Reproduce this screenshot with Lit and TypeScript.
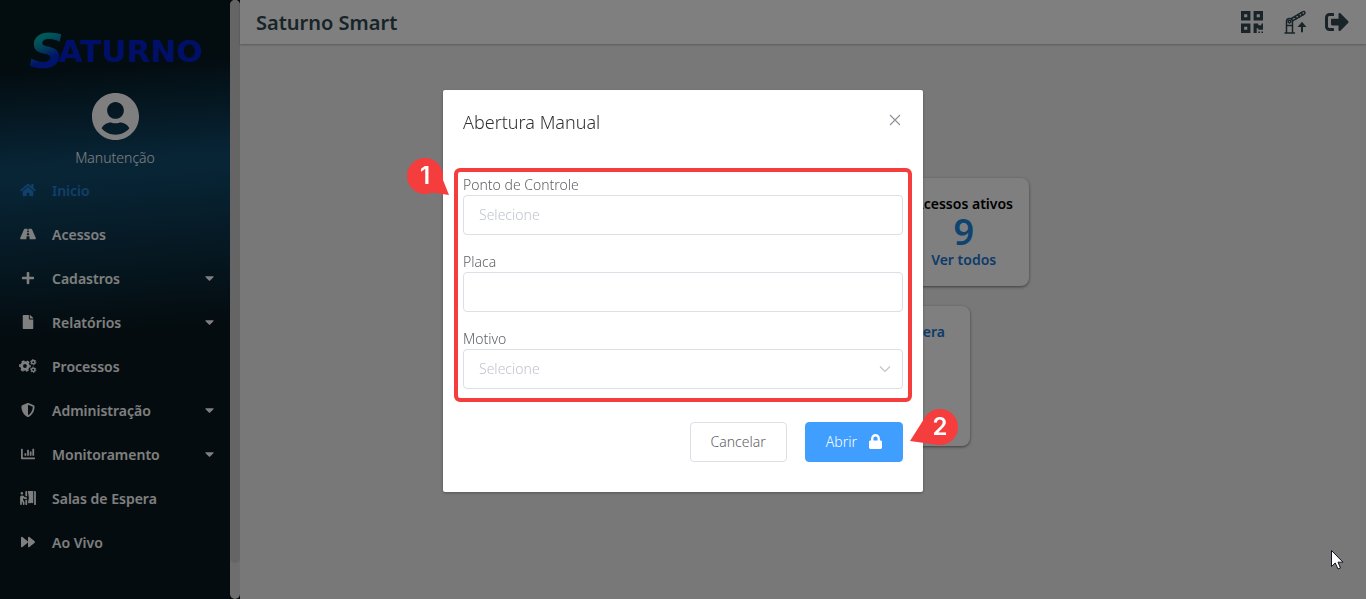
import { LitElement, html, css, svg, nothing } from "lit";
import { customElement, property, state } from "lit/decorators.js";

interface Glyph {
  box: string;
  body: unknown;
}

const path = (box: string, d: string): Glyph => ({ box, body: svg`<path d=${d} />` });

const ICONS: Record<string, Glyph> = {
  home: path("0 0 576 512", "M280.37 148.26L96 300.11V464a16 16 0 0 0 16 16l112.06-.29a16 16 0 0 0 15.92-16V368a16 16 0 0 1 16-16h64a16 16 0 0 1 16 16v95.64a16 16 0 0 0 16 16.05L464 480a16 16 0 0 0 16-16V300L295.67 148.26a12.19 12.19 0 0 0-15.3 0zM571.6 251.47L488 182.56V44.05a12 12 0 0 0-12-12h-56a12 12 0 0 0-12 12v72.61L318.47 43a48 48 0 0 0-61 0L4.34 251.47a12 12 0 0 0-1.6 16.9l25.5 31A12 12 0 0 0 45.15 301l235.22-193.74a12.19 12.19 0 0 1 15.3 0L530.9 301a12 12 0 0 0 16.9-1.6l25.5-31a12 12 0 0 0-1.7-16.93z"),
  road: path("0 0 576 512", "M573.19 402.67l-139.79-320C428.43 71.29 417.6 64 405.68 64h-97.59l2.45 23.16c.5 4.72-3.21 8.84-7.96 8.84h-29.16c-4.75 0-8.46-4.12-7.96-8.84L267.91 64h-97.59c-11.93 0-22.76 7.29-27.73 18.67L2.8 402.67C-6.45 423.86 8.31 448 30.54 448h196.84l10.31-97.68c.86-8.14 7.72-14.32 15.91-14.32h68.8c8.19 0 15.05 6.18 15.91 14.32L348.62 448h196.84c22.23 0 36.99-24.14 27.73-45.33zM260.4 135.16a8 8 0 0 1 7.96-7.16h39.29c4.09 0 7.53 3.09 7.96 7.16l4.6 43.58c.75 7.09-4.81 13.26-11.93 13.26h-40.54c-7.13 0-12.68-6.17-11.93-13.26l4.59-43.58zM315.64 304h-55.29c-9.5 0-16.91-8.23-15.91-17.68l5.07-48c.86-8.14 7.72-14.32 15.91-14.32h45.15c8.19 0 15.05 6.18 15.91 14.32l5.07 48c1 9.45-6.41 17.68-15.91 17.68z"),
  plus: path("0 0 448 512", "M416 208H272V64c0-17.67-14.33-32-32-32h-32c-17.67 0-32 14.33-32 32v144H32c-17.67 0-32 14.33-32 32v32c0 17.67 14.33 32 32 32h144v144c0 17.67 14.33 32 32 32h32c17.67 0 32-14.33 32-32V304h144c17.67 0 32-14.33 32-32v-32c0-17.67-14.33-32-32-32z"),
  file: path("0 0 384 512", "M224 136V0H24C10.7 0 0 10.7 0 24v464c0 13.3 10.7 24 24 24h336c13.3 0 24-10.7 24-24V160H248c-13.2 0-24-10.8-24-24zm160-14.1v6.1H256V0h6.1c6.4 0 12.5 2.5 17 7l97.9 98c4.5 4.5 7 10.6 7 16.9z"),
  cogs: {
    box: "0 0 640 512",
    body: svg`
      <g fill="none" stroke="currentColor">
        <circle cx="208" cy="256" r="122" stroke-width="104" />
        <circle cx="208" cy="256" r="186" stroke-width="60" stroke-dasharray="105 89.8" stroke-dashoffset="52" />
        <circle cx="512" cy="116" r="62" stroke-width="54" />
        <circle cx="512" cy="116" r="98" stroke-width="34" stroke-dasharray="56 46.600" />
        <circle cx="512" cy="396" r="62" stroke-width="54" />
        <circle cx="512" cy="396" r="98" stroke-width="34" stroke-dasharray="56 46.600" />
      </g>`,
  },
  shield: path("0 0 512 512", "M466.5 83.7l-192-80a48.15 48.15 0 0 0-36.9 0l-192 80C27.7 91.1 16 108.6 16 128c0 198.5 114.5 335.7 221.5 380.3 11.8 4.9 25.1 4.9 36.9 0C360.1 472.6 496 349.3 496 128c0-19.4-11.7-36.9-29.5-44.3zM256.1 446.3l-.1-381 175.9 73.3c-3.3 151.4-82.1 261.1-175.8 307.7z"),
  chart: path("0 0 512 512", "M332.8 320h38.4c6.4 0 12.8-6.4 12.8-12.8V172.8c0-6.4-6.4-12.8-12.8-12.8h-38.4c-6.4 0-12.8 6.4-12.8 12.8v134.4c0 6.4 6.4 12.8 12.8 12.8zm96 0h38.4c6.4 0 12.8-6.4 12.8-12.8V76.8c0-6.4-6.4-12.8-12.8-12.8h-38.4c-6.4 0-12.8 6.4-12.8 12.8v230.4c0 6.4 6.4 12.8 12.8 12.8zm-288 0h38.4c6.4 0 12.8-6.4 12.8-12.8v-70.4c0-6.4-6.4-12.8-12.8-12.8h-38.4c-6.4 0-12.8 6.4-12.8 12.8v70.4c0 6.4 6.4 12.8 12.8 12.8zm96 0h38.4c6.4 0 12.8-6.4 12.8-12.8V108.8c0-6.4-6.4-12.8-12.8-12.8h-38.4c-6.4 0-12.8 6.4-12.8 12.8v198.4c0 6.4 6.4 12.8 12.8 12.8zM496 384H64V80c0-8.84-7.16-16-16-16H16C7.16 64 0 71.16 0 80v336c0 17.67 14.33 32 32 32h464c8.84 0 16-7.16 16-16v-32c0-8.84-7.16-16-16-16z"),
  booth: path("0 0 576 512", "M192 496c0 8.8 7.2 16 16 16h32c8.8 0 16-7.2 16-16V320h-64v176zm32-272h-50.9l-45.2-45.3C115.8 166.6 99.7 160 82.7 160H64c-17.1 0-33.2 6.7-45.3 18.8C6.7 190.9 0 207 0 224.1L.2 320 0 480c0 17.7 14.3 32 31.9 32 17.6 0 32-14.3 32-32l.1-100.7c.9.5 1.6 1.3 2.5 1.7l29.1 43v56c0 17.7 14.3 32 32 32s32-14.3 32-32v-56.5c0-9.9-2.3-19.8-6.7-28.6l-41.2-61.3V253l20.9 20.9c9.1 9.1 21.1 14.1 33.9 14.1H224c17.7 0 32-14.3 32-32s-14.3-32-32-32zM64 128c26.5 0 48-21.5 48-48S90.5 32 64 32 16 53.5 16 80s21.5 48 48 48zm224-96l31.5 223.1-30.9 154.6c-4.3 21.6 13 38.3 31.4 38.3 15.2 0 28-9.1 32.3-30.4.9 16.9 14.6 30.4 31.7 30.4 17.7 0 32-14.3 32-32 0 17.7 14.3 32 32 32s32-14.3 32-32V0H288v32zm-96 0v160h64V0h-32c-17.7 0-32 14.3-32 32zM544 0h-32v496c0 8.8 7.2 16 16 16h32c8.8 0 16-7.2 16-16V32c0-17.7-14.3-32-32-32z"),
  forward: path("0 0 512 512", "M500.5 231.4l-192-160C287.9 54.3 256 68.6 256 96v320c0 27.4 31.9 41.8 52.5 24.6l192-160c15.3-12.8 15.3-36.4 0-49.2zm-256 0l-192-160C31.9 54.3 0 68.6 0 96v320c0 27.4 31.9 41.8 52.5 24.6l192-160c15.3-12.8 15.3-36.4 0-49.2z"),
  caret: path("0 0 320 512", "M31.3 192h257.3c17.8 0 26.7 21.5 14.1 34.1L174.1 354.8c-7.8 7.8-20.5 7.8-28.3 0L17.2 226.1C4.6 213.5 13.5 192 31.3 192z"),
  lock: path("0 0 448 512", "M400 224h-24v-72C376 68.2 307.8 0 224 0S72 68.2 72 152v72H48c-26.5 0-48 21.5-48 48v192c0 26.5 21.5 48 48 48h352c26.5 0 48-21.5 48-48V272c0-26.5-21.5-48-48-48zm-104 0H152v-72c0-39.7 32.3-72 72-72s72 32.3 72 72v72z"),
  exit: path("0 0 512 512", "M497 273L329 441c-15 15-41 4.5-41-17v-96H152c-13.3 0-24-10.7-24-24v-96c0-13.3 10.7-24 24-24h136V88c0-21.4 25.9-32 41-17l168 168c9.3 9.4 9.3 24.6 0 34zM192 436v-40c0-6.6-5.4-12-12-12H96c-17.7 0-32-14.3-32-32V160c0-17.7 14.3-32 32-32h84c6.6 0 12-5.4 12-12V76c0-6.6-5.4-12-12-12H96c-53 0-96 43-96 96v192c0 53 43 96 96 96h84c6.6 0 12-5.4 12-12z"),
  user: path("0 8 496 496", "M248 8C111 8 0 119 0 256s111 248 248 248 248-111 248-248S385 8 248 8zm0 96c48.6 0 88 39.4 88 88s-39.4 88-88 88-88-39.4-88-88 39.4-88 88-88zm0 344c-58.7 0-111.3-26.6-146.5-68.2 18.8-35.4 55.6-59.8 98.5-59.8 2.4 0 4.8.4 7.1 1.1 13 4.2 26.6 6.9 40.9 6.9 14.3 0 28-2.7 40.9-6.9 2.3-.7 4.7-1.1 7.1-1.1 42.9 0 79.7 24.4 98.5 59.8C359.3 421.4 306.7 448 248 448z"),
  qrcode: path("0 32 448 448", "M0 224h192V32H0v192zM64 96h64v64H64V96zm192-64v192h192V32H256zm128 128h-64V96h64v64zM0 480h192V288H0v192zm64-128h64v64H64v-64zm352-64h32v128h-96v-32h-32v96h-64V288h96v32h64v-32zm0 160h32v32h-32v-32zm-64 0h32v32h-32v-32z"),
  gate: {
    box: "0 0 24 24",
    body: svg`
      <g fill="none" stroke="currentColor" stroke-width="1.5" stroke-linejoin="round" stroke-linecap="round">
        <path d="M3.500 22V11.500a3 3 0 0 1 6 0V22M2 23h9.500" />
        <path d="M8.500 8.500L19.500 1.900q2-.9 2.400.5.300 1.300-1 2L10 10.700" />
        <circle cx="6.500" cy="11.600" r="1.400" />
        <path d="M12 6.800l1.300 1.700M15.200 4.900l1.300 1.700M18.200 3.100l1.300 1.700" stroke-width="2" />
        <path d="M4 15.500h5" />
        <path d="M19 21.500v-5" stroke-width="2" />
      </g>
      <path d="M14.600 17L19 11.800 23.400 17z" />`,
  },
  close: {
    box: "0 0 12 12",
    body: svg`<path d="M1 1l10 10M11 1L1 11" fill="none" stroke="currentColor" stroke-width="1.2" />`,
  },
  chevron: {
    box: "0 0 12 12",
    body: svg`<path d="M1 3.500l5 5 5-5" fill="none" stroke="currentColor" stroke-width="1.2" />`,
  },
};

@customElement("ui-icon")
export class UiIcon extends LitElement {
  @property() name = "";

  static styles = css`
    :host {
      display: inline-flex;
    }
    .glyph {
      width: 100%;
      height: 100%;
      fill: currentColor;
    }
  `;

  render() {
    const icon = ICONS[this.name];
    return icon
      ? html`<svg class="glyph" viewBox=${icon.box} aria-hidden="true">${icon.body}</svg>`
      : nothing;
  }
}

interface MenuItem {
  label: string;
  icon: string;
  group?: boolean;
  active?: boolean;
}

const MENU: MenuItem[] = [
  { label: "Inicio", icon: "home", active: true },
  { label: "Acessos", icon: "road" },
  { label: "Cadastros", icon: "plus", group: true },
  { label: "Relatórios", icon: "file", group: true },
  { label: "Processos", icon: "cogs" },
  { label: "Administração", icon: "shield", group: true },
  { label: "Monitoramento", icon: "chart", group: true },
  { label: "Salas de Espera", icon: "booth" },
  { label: "Ao Vivo", icon: "forward" },
];

@customElement("side-menu")
export class SideMenu extends LitElement {
  static styles = css`
    :host {
      display: flex;
      flex: none;
      background: #030c10;
      color: #fff;
    }
    .panel {
      width: 230px;
      box-sizing: border-box;
      padding-top: 30px;
      background: linear-gradient(
        176deg,
        #06181f 0,
        #06181f 70px,
        #104a6c 168px,
        #104a6c 182px,
        #08181e 340px,
        #08181e 100%
      );
    }
    .logo {
      display: flex;
      align-items: center;
      justify-content: center;
      height: 42px;
      font: bold 31px/42px "DejaVu Sans", sans-serif;
      color: #0020d0;
    }
    .initial {
      padding-left: 2px;
      font: italic bold 48px/42px "DejaVu Sans", sans-serif;
      margin-right: -5px;
      background: linear-gradient(155deg, #00b0b0 25%, #0878b0 45%, #0028d8 65%);
      background-clip: text;
      -webkit-background-clip: text;
      color: transparent;
    }
    .user {
      display: flex;
      flex-direction: column;
      align-items: center;
      gap: 8px;
      margin-top: 21px;
      font-size: 14px;
      font-weight: 300;
      line-height: 20px;
    }
    .avatar {
      width: 47px;
      height: 47px;
    }
    .list {
      list-style: none;
      margin: 0;
      padding: 0;
    }
    .link {
      display: flex;
      align-items: center;
      height: 44px;
      padding: 0 16px;
      font-size: 14px;
      font-weight: 600;
      color: inherit;
      text-decoration: none;
    }
    .active {
      color: #2080d8;
    }
    .icon {
      width: 24px;
      height: 14px;
      margin-right: 12px;
    }
    .label {
      flex: 1;
    }
    .caret {
      width: 9px;
      height: 14px;
    }
    .track {
      width: 10px;
      border-radius: 5px;
      background: #dcdcdc;
    }
    .thumb {
      height: 94%;
      border-radius: 5px;
      background: #cacaca;
    }
  `;

  render() {
    return html`
      <div class="panel">
        <div class="logo"><span class="initial">S</span>ATURNO</div>
        <div class="user">
          <ui-icon class="avatar" name="user"></ui-icon>
          <span>Manutenção</span>
        </div>
        <nav>
          <ul class="list">
            ${MENU.map(
              (item) => html`<li>
                <a class="link ${item.active ? "active" : ""}" href="#">
                  <ui-icon class="icon" name=${item.icon}></ui-icon>
                  <span class="label">${item.label}</span>
                  ${item.group ? html`<ui-icon class="caret" name="caret"></ui-icon>` : nothing}
                </a>
              </li>`
            )}
          </ul>
        </nav>
      </div>
      <div class="track"><div class="thumb"></div></div>
    `;
  }
}

@customElement("home-page")
export class HomePage extends LitElement {
  static styles = css`
    :host {
      display: flex;
      flex-direction: column;
      flex: 1;
      min-width: 0;
      background: #f0f0f0;
    }
    .bar {
      display: flex;
      align-items: center;
      gap: 18px;
      height: 44px;
      padding: 0 17px 0 16px;
      background: #fff;
      box-shadow: 0 1px 2px rgba(0, 0, 0, 0.25);
      color: #304850;
    }
    .title {
      flex: 1;
      margin: 0;
      font-size: 20px;
      font-weight: 600;
    }
    .tool {
      display: flex;
      padding: 0;
      border: 0;
      background: none;
      color: inherit;
    }
    .tool-icon {
      width: 24px;
      height: 24px;
    }
    .tool-icon.small {
      width: 26px;
      height: 22px;
    }
    .cards {
      display: flex;
      flex-direction: column;
      align-items: center;
      gap: 20px;
      padding-top: 134px;
    }
    .row {
      display: flex;
      justify-content: flex-end;
      width: 452px;
    }
    .card {
      box-sizing: border-box;
      border-radius: 8px;
      background: #fff;
      box-shadow: 0 1px 3px rgba(0, 0, 0, 0.5);
      font-size: 14px;
      font-weight: 600;
    }
    .count {
      display: flex;
      flex-direction: column;
      align-items: center;
      padding: 16px;
      color: #000;
      line-height: 20px;
    }
    .number {
      font-size: 36px;
      line-height: 36px;
      color: #2088e0;
    }
    .more {
      color: #1976d2;
      text-decoration: none;
    }
    .room {
      width: 334px;
      height: 140px;
      padding: 16px 25px;
      text-align: right;
      line-height: 20px;
      color: #1976d2;
    }
  `;

  render() {
    return html`
      <header class="bar">
        <h1 class="title">Saturno Smart</h1>
        <button class="tool" aria-label="QR Code"><ui-icon class="tool-icon small" name="qrcode"></ui-icon></button>
        <button class="tool" aria-label="Cancela"><ui-icon class="tool-icon" name="gate"></ui-icon></button>
        <button class="tool" aria-label="Sair"><ui-icon class="tool-icon" name="exit"></ui-icon></button>
      </header>
      <main class="cards">
        <div class="row">
          <section class="card count">
            <span>Acessos ativos</span>
            <span class="number">9</span>
            <a class="more" href="#">Ver todos</a>
          </section>
        </div>
        <section class="card room">Salas de Espera</section>
      </main>
    `;
  }
}

@customElement("manual-dialog")
export class ManualDialog extends LitElement {
  @state() private reason = "";

  static styles = css`
    :host {
      position: fixed;
      inset: 0;
      display: flex;
      align-items: flex-start;
      justify-content: center;
      padding-top: 15vh;
      background: rgba(0, 0, 0, 0.5);
      font-weight: 300;
    }
    .dialog {
      box-sizing: border-box;
      width: 480px;
      max-width: 100%;
      padding: 20px 20px 30px;
      border-radius: 2px;
      background: #fff;
      box-shadow: 0 1px 3px rgba(0, 0, 0, 0.3);
      color: #606266;
      font-size: 14px;
    }
    .head {
      display: flex;
      justify-content: space-between;
      align-items: center;
      margin-bottom: 40px;
    }
    .title {
      margin: 0;
      font-size: 18px;
      font-weight: 300;
      line-height: 24px;
      color: #303133;
    }
    .close {
      display: flex;
      padding: 0 2px 4px;
      border: 0;
      background: none;
      color: #909399;
    }
    .close-icon,
    .chevron {
      width: 12px;
      height: 12px;
    }
    .form {
      position: relative;
      display: flex;
      flex-direction: column;
      gap: 16px;
    }
    .field {
      display: flex;
      flex-direction: column;
    }
    .label {
      line-height: 21px;
    }
    .control {
      display: grid;
      align-items: center;
    }
    .box {
      grid-area: 1 / 1;
      box-sizing: border-box;
      width: 100%;
      height: 40px;
      padding: 0 15px;
      border: 1px solid #dcdfe6;
      border-radius: 4px;
      outline: 0;
      appearance: none;
      background: #fff;
      color: #606266;
      font: inherit;
    }
    .box::placeholder,
    .empty {
      color: #c0c4cc;
      opacity: 1;
    }
    .chevron {
      grid-area: 1 / 1;
      justify-self: end;
      margin-right: 12px;
      color: #c0c4cc;
      pointer-events: none;
    }
    .frame {
      position: absolute;
      inset: -6px -9px -13px;
      border: 4px solid #f53d3d;
      border-radius: 6px;
      pointer-events: none;
    }
    .actions {
      display: flex;
      justify-content: flex-end;
      gap: 18px;
      margin-top: 33px;
    }
    .button {
      position: relative;
      display: flex;
      align-items: center;
      justify-content: center;
      gap: 12px;
      box-sizing: border-box;
      height: 40px;
      padding: 0 20px;
      border: 1px solid #dcdfe6;
      border-radius: 4px;
      background: #fff;
      color: #606266;
      font: inherit;
    }
    .primary {
      border-color: #409eff;
      background: #409eff;
      color: #fff;
    }
    .lock {
      width: 13px;
      height: 15px;
    }
    .marker {
      position: absolute;
      width: 36px;
      height: 36px;
      color: #fff;
      font: 600 24px/36px Inter, sans-serif;
      text-align: center;
    }
    .marker.first {
      left: -56px;
      top: -16px;
    }
    .marker.second {
      right: -56px;
      top: -14px;
    }
    .drop {
      position: absolute;
      inset: 0;
      width: 36px;
      height: 36px;
      overflow: visible;
      fill: #f53d3d;
    }
    .digit {
      position: relative;
    }
  `;

  private pick(event: Event) {
    this.reason = (event.target as HTMLSelectElement).value;
  }

  render() {
    return html`
      <div class="dialog" role="dialog" aria-modal="true" aria-labelledby="heading">
        <header class="head">
          <h2 class="title" id="heading">Abertura Manual</h2>
          <button class="close" aria-label="Fechar"><ui-icon class="close-icon" name="close"></ui-icon></button>
        </header>
        <form class="form">
          <div class="field">
            <label class="label" for="point">Ponto de Controle</label>
            <div class="control"><input class="box" id="point" placeholder="Selecione" /></div>
          </div>
          <div class="field">
            <label class="label" for="plate">Placa</label>
            <div class="control"><input class="box" id="plate" /></div>
          </div>
          <div class="field">
            <label class="label" for="reason">Motivo</label>
            <div class="control">
              <select class="box ${this.reason ? "" : "empty"}" id="reason" @change=${this.pick}>
                <option value="">Selecione</option>
              </select>
              <ui-icon class="chevron" name="chevron"></ui-icon>
            </div>
          </div>
          <div class="frame"></div>
          <div class="marker first">
            <svg class="drop" viewBox="0 0 36 36" aria-hidden="true">
              <circle cx="18" cy="18" r="18" />
              <path d="M35.500 15L36 22 42 37 25 34.600z" />
            </svg>
            <span class="digit">1</span>
          </div>
        </form>
        <footer class="actions">
          <button class="button">Cancelar</button>
          <button class="button primary">
            Abrir
            <ui-icon class="lock" name="lock"></ui-icon>
            <span class="marker second">
              <svg class="drop" viewBox="0 0 36 36" aria-hidden="true">
                <circle cx="18" cy="18" r="18" />
                <path d="M2 10L-12 32 15 35.700z" />
              </svg>
              <span class="digit">2</span>
            </span>
          </button>
        </footer>
      </div>
    `;
  }
}

@customElement("app-root")
export class AppRoot extends LitElement {
  static styles = css`
    :host {
      display: block;
      font-family: "Noto Sans", "Open Sans", sans-serif;
      font-weight: 400;
    }
    .shell {
      display: flex;
      min-height: 100vh;
    }
    .pointer {
      position: fixed;
      right: 22px;
      bottom: 29px;
      width: 13px;
      height: 20px;
      overflow: visible;
      fill: #fff;
      stroke: #101020;
    }
  `;

  render() {
    return html`
      <div class="shell">
        <side-menu></side-menu>
        <home-page></home-page>
      </div>
      <manual-dialog></manual-dialog>
      <svg class="pointer" viewBox="0 0 13 20" aria-hidden="true">
        <path d="M.5.500V16.500L4.200 13 7 19 9.500 18 7 12.200H12z" />
      </svg>
    `;
  }
}
